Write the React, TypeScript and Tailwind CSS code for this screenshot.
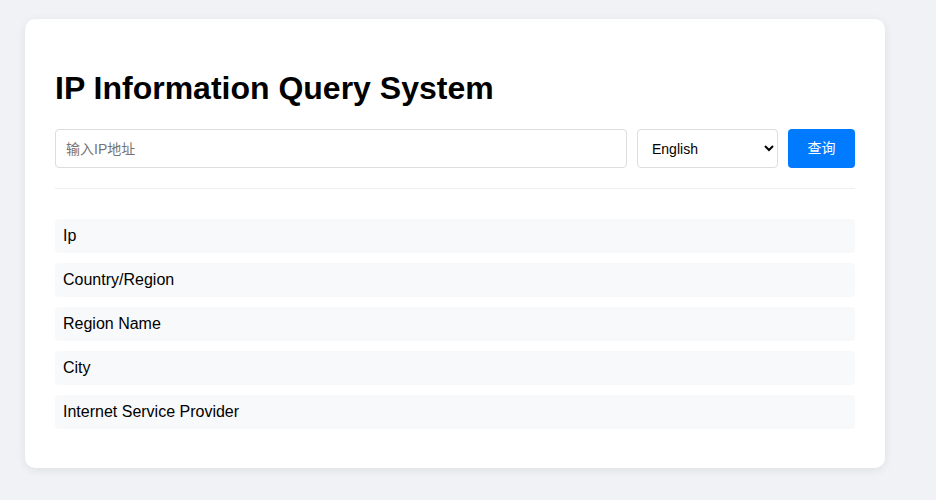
import { useState } from "react"

const fields = ["Ip", "Country/Region", "Region Name", "City", "Internet Service Provider"]

export default function App() {
  const [ip, setIp] = useState("")
  const [lang, setLang] = useState("en")

  return (
    <div
      className="min-h-[500px] bg-[#f0f2f5] pl-[25px] pt-[19px] pb-8"
      style={{ fontFamily: '"Liberation Sans", Arial, "Noto Sans CJK SC", sans-serif' }}
    >
      <div className="w-[860px] rounded-[10px] bg-white p-[30px] pb-[39px] shadow-[0_2px_10px_rgba(0,0,0,0.08)]">
        <h1 className="mt-[21px] mb-[22px] text-[32px] font-bold leading-[37px] text-black">
          IP Information Query System
        </h1>

        <div className="flex gap-[10px]">
          <input
            value={ip}
            onChange={(e) => setIp(e.target.value)}
            placeholder="输入IP地址"
            className="h-[39px] flex-1 rounded-[4px] border border-[#ddd] px-[10px] text-[14px] text-black placeholder:text-[#757575] outline-none"
          />
          <select
            value={lang}
            onChange={(e) => setLang(e.target.value)}
            className="h-[39px] w-[141px] rounded-[4px] border border-[#ddd] bg-white px-[10px] text-[14px] text-black"
          >
            <option value="en">English</option>
            <option value="zh">中文</option>
          </select>
          <button className="h-[39px] w-[67px] rounded-[4px] bg-[#007bff] text-[14px] text-white">
            查询
          </button>
        </div>

        <div className="mt-5 mb-[30px] border-t border-[#eee]" />

        <div className="flex flex-col gap-[10px]">
          {fields.map((f) => (
            <div key={f} className="h-[34px] rounded-[4px] bg-[#f8f9fa] px-2 text-[16px] leading-[34px] text-black">
              {f}
            </div>
          ))}
        </div>
      </div>
    </div>
  )
}
